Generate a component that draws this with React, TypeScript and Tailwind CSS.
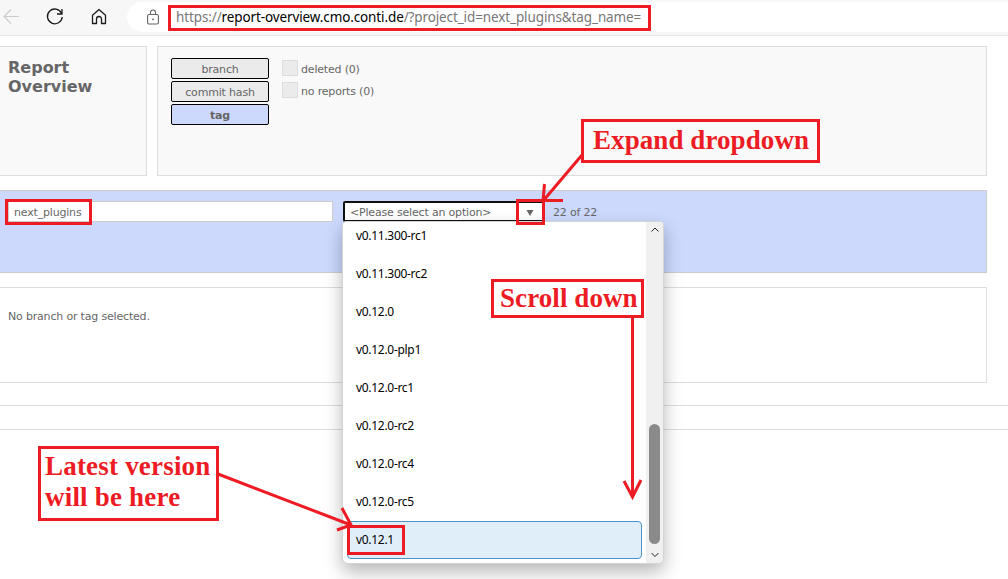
import React from 'react';

const versions = [
  'v0.11.300-rc1',
  'v0.11.300-rc2',
  'v0.12.0',
  'v0.12.0-plp1',
  'v0.12.0-rc1',
  'v0.12.0-rc2',
  'v0.12.0-rc4',
  'v0.12.0-rc5',
];

function Toolbar() {
  return (
    <header className="flex h-9 border-b border-[#e8e8e8] bg-[#f7f7f7] pt-0.5 tracking-normal">
      <div className="relative w-[127px] shrink-0">
        <svg className="absolute left-0 top-0 h-[31px] w-[127px]" viewBox="0 2 127 31" fill="none">
          <path d="M19 16.5H4M11 9.5L4 16.5L11 23.5" stroke="#cbcbcb" strokeWidth="1.1" />
          <path d="M61.5 13.2A7.4 7.4 0 1 0 62.2 17M62 9V14H57" stroke="#1b1b1b" strokeWidth="1.3" />
          <path
            d="M92.5 15.2L99 9.5L105.500 15.2V23.500H101.500V19A2.500 2.500 0 0 0 96.500 19V23.500H92.500Z"
            stroke="#1b1b1b"
            strokeWidth="1.300"
            strokeLinejoin="round"
          />
        </svg>
      </div>
      <div className="flex h-[30px] grow items-center rounded-l-full bg-white pl-5">
        <svg className="h-4 w-3 shrink-0" viewBox="0 0 12 16" fill="none" stroke="#666">
          <rect x="0.6" y="5.500" width="10.800" height="9.500" rx="1.500" strokeWidth="1.100" />
          <path d="M3.500 5.500V3.500A2.500 2.500 0 0 1 8.500 3.500V5.500" strokeWidth="1.100" />
          <circle cx="6" cy="10.300" r="0.900" fill="#555" stroke="none" />
        </svg>
        <span className="ml-[17px] whitespace-nowrap font-['Noto_Sans',sans-serif] text-[13.500px] tracking-[-0.115px] text-[#777]">
          https://<span className="text-black">report-overview.cmo.conti.de</span>/?project_id=next_plugins&amp;tag_name=
        </span>
      </div>
    </header>
  );
}

function Check({ label }: { label: string }) {
  return (
    <label className="flex h-[22px] items-start gap-[3px]">
      <span className="h-4 w-4 border border-[#ddd] bg-[#ebebeb]" />
      <span className="whitespace-nowrap leading-[19px]">{label}</span>
    </label>
  );
}

function Menu() {
  return (
    <div className="absolute left-[342px] top-[221px] flex h-[343px] w-[322px] overflow-hidden rounded-b-md rounded-t-sm border border-[#d4d4d4] bg-white shadow-[0_8px_18px_rgba(0,0,0,0.28)]">
      <ul className="w-[303px] font-['Noto_Sans',sans-serif] text-xs tracking-[-0.300px] text-black">
        {versions.map((v, i) => (
          <li key={v} className={i === 0 ? 'flex h-[33px] items-start pl-[13px] pt-[5px] leading-[18px]' : 'flex h-[38px] items-center pl-[13px] leading-[18px]'}>
            {v}
          </li>
        ))}
        <li className="ml-1 flex h-[38px] w-[295px] items-center rounded-sm border border-[#4c94c8] bg-[#e0eefa] pl-2">v0.12.1</li>
      </ul>
      <div className="flex grow flex-col items-center bg-[#f0f0f0] pt-[5px]">
        <svg className="h-1.5 w-2" viewBox="0 0 8 6" fill="none" stroke="#222">
          <path d="M0.500 4.500L4 1L7.500 4.500" />
        </svg>
        <div className="mt-[191px] h-[120px] w-[11px] rounded-full bg-[#8a8a8a]" />
        <svg className="mt-2 h-1.5 w-2" viewBox="0 0 8 6" fill="none" stroke="#222">
          <path d="M0.500 1L4 4.500L7.500 1" />
        </svg>
      </div>
    </div>
  );
}

function Annotations() {
  return (
    <div className="pointer-events-none absolute inset-0 whitespace-nowrap font-['Liberation_Serif',serif] font-bold text-[#ed1c24]">
      <div className="absolute left-[168px] top-[5px] h-[26px] w-[483px] border-[3px] border-[#ed1c24]" />
      <div className="absolute left-[5px] top-[199px] h-[26px] w-[87px] border-[3px] border-[#ed1c24]" />
      <div className="absolute left-[516px] top-[199px] h-[26px] w-[29px] border-[3px] border-[#ed1c24]" />
      <div className="absolute left-[347px] top-[525px] h-[30px] w-[58px] border-[3px] border-[#ed1c24]" />
      <div className="absolute left-[581px] top-[119px] h-11 w-[239px] border-[3px] border-[#ed1c24] pl-[9px] text-[27px] leading-[37px] tracking-[0.080px]">
        Expand dropdown
      </div>
      <div className="absolute left-[491px] top-[279px] h-[39px] w-[153px] border-[3px] border-[#ed1c24] bg-white pl-1.5 text-[27px] leading-[33px] tracking-[0.080px]">
        Scroll down
      </div>
      <div className="absolute left-[38px] top-[446px] h-[75px] w-[181px] border-[3px] border-[#ed1c24] bg-white pl-1 text-[27px] leading-[31px] tracking-[0.200px] pt-0.5">
        Latest version
        <br />
        will be here
      </div>
      <svg className="absolute inset-0 h-[579px] w-[1008px]" fill="none" stroke="#ed1c24" strokeWidth="3">
        <path d="M582 155L543 201M544.500 184L543 201M543 200.500H563" />
        <path d="M632.500 317V497M624 481L632.500 497L641 480" />
        <path d="M218 474L351 525M342 508L351 525L337 530" />
      </svg>
    </div>
  );
}

export default function App() {
  return (
    <div className="relative h-[579px] w-[1008px] overflow-hidden bg-white font-['DejaVu_Sans',sans-serif] text-[11px] tracking-[-0.180px] text-[#666]">
      <Toolbar />
      <div className="mt-2.5 flex h-[130px] w-[987px] gap-2.5">
        <section className="w-[147px] shrink-0 border border-l-0 border-[#ddd] bg-[#f9f9f9] pl-2 pt-[11px]">
          <h1 className="text-[16px] font-bold leading-[19px] tracking-normal">
            Report
            <br />
            Overview
          </h1>
        </section>
        <section className="flex grow gap-[13px] border border-[#ddd] bg-[#f9f9f9] pl-[13px] pt-[11px]">
          <div className="flex w-[98px] flex-col gap-0.5 text-center">
            <button className="h-[21px] rounded-xs border border-black bg-[#ebebeb] pt-[3px] leading-4">branch</button>
            <button className="h-[21px] rounded-xs border border-black bg-[#ebebeb] pt-[3px] leading-4">commit hash</button>
            <button className="h-[21px] rounded-xs border border-black bg-[#ccd9fd] pt-[3px] font-bold leading-4">tag</button>
          </div>
          <div className="pt-0.5">
            <Check label="deleted (0)" />
            <Check label="no reports (0)" />
          </div>
        </section>
      </div>
      <section className="mt-3.5 flex h-[83px] w-[987px] items-start border border-l-0 border-[#ccc] bg-[#ccd9fd] pl-2 pt-2.5">
        <div className="h-[21px] w-[325px] border border-[#ccc] bg-white pl-[5px] leading-[21px]">next_plugins</div>
        <div className="ml-2.5 flex h-[21px] w-[201px] items-center justify-between rounded-xs border-2 border-[#101010] bg-white pl-[5px] pr-2">
          <span className="pt-[3px] leading-4">&lt;Please select an option&gt;</span>
          <svg className="mt-0.5 h-1.5 w-2" viewBox="0 0 8 6">
            <path d="M0.500 0H7.500L4 6Z" fill="#666" />
          </svg>
        </div>
        <span className="ml-[9px] leading-[23px]">22 of 22</span>
      </section>
      <section className="mt-3.5 h-24 w-[987px] border border-l-0 border-[#ddd] pl-2 pt-5 leading-[17px]">No branch or tag selected.</section>
      <div className="mt-[22px] h-[25px] border-y border-[#ddd]" />
      <Menu />
      <Annotations />
    </div>
  );
}
